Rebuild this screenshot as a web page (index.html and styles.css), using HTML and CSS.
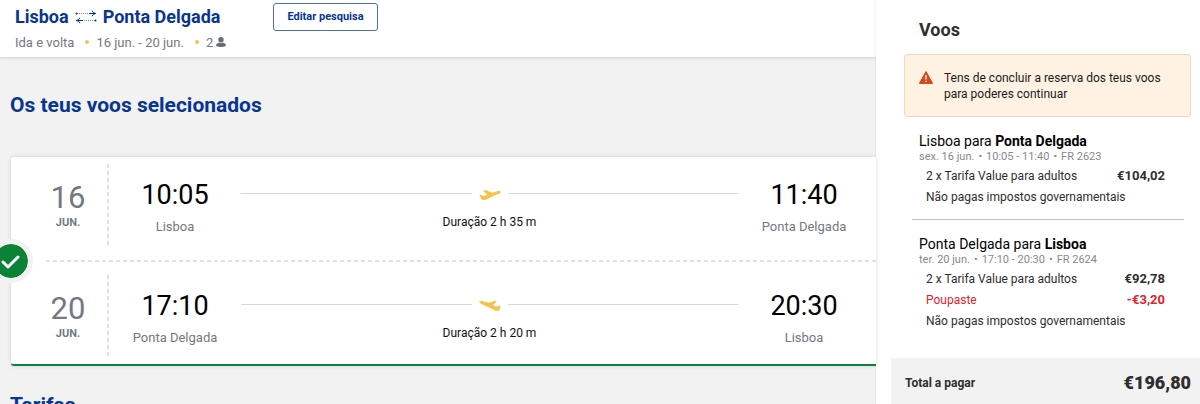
FILE: index.html
```html
<!DOCTYPE html>
<html lang="pt">
<head>
    <meta charset="UTF-8">
    <meta name="viewport" content="width=device-width, initial-scale=1.0">
    <title>Lisboa - Ponta Delgada</title>
    <link rel="stylesheet" href="styles.css">
</head>
<body>
    <svg class="sprite" aria-hidden="true">
        <symbol id="takeoff" viewBox="0 0 22 12">
            <path d="M.4 6.4 2 5.8 4.4 7 8 5.7 4.2 1.6 6.6 .9 13.2 3.8 18.2 2.2C20 1.8 21.4 2 21.6 2.9 21.8 3.7 20.8 4.4 19.4 5L13.8 7.2 8.6 10C6.2 11.2 4 11.4 2.4 10.6L1.8 8.6Z"/>
        </symbol>
        <symbol id="landing" viewBox="0 0 22 12">
            <path d="M.4 1.6C1 .7 2.6 .9 4.2 1.3L10 2.8 15.8.8 17.8 1.6 13.9 5 17.2 6.8 20.2 5.6 21.6 6.2 20.4 10.6C18.6 11.2 16 10.6 13.6 9.2L8 6.4 2.4 4C1.2 3.4 0 2.4.4 1.6Z"/>
        </symbol>
    </svg>

    <div class="page">
        <main>
            <header class="trip-header">
                <div class="trip">
                    <h1>
                        <span>Lisboa</span>
                        <svg class="swap" viewBox="0 0 22 14" aria-hidden="true">
                            <path class="dots" d="M2 3.5h14M7 10.5h14"/>
                            <path d="M14 3.5h7M17 .8Q17.6 2.8 20.5 3.5 17.6 4.2 17 6.2M8 10.5H1M5 7.8Q4.4 9.8 1.5 10.5 4.4 11.2 5 13.2"/>
                            <circle cx="1.5" cy="3.5" r="1"/>
                            <circle cx="20.5" cy="10.5" r="1"/>
                        </svg>
                        <span>Ponta Delgada</span>
                    </h1>
                    <ul class="trip-info">
                        <li>Ida e volta</li>
                        <li>16 jun. - 20 jun.</li>
                        <li>2
                            <svg class="person" viewBox="0 0 10 10" aria-hidden="true">
                                <circle cx="5" cy="2.8" r="2.7"/>
                                <path d="M0 9C0 6.8 1.8 6 3.4 5.6Q5 6.8 6.6 5.6C8.2 6 10 6.8 10 9Q5 11 0 9Z"/>
                            </svg>
                        </li>
                    </ul>
                </div>
                <button type="button" class="edit-btn">Editar pesquisa</button>
            </header>

            <h2>Os teus voos selecionados</h2>

            <section class="journeys">
                <span class="selected">
                    <svg viewBox="0 0 20 20" aria-hidden="true"><path d="M2 11l5 5L17 6"/></svg>
                </span>

                <div class="journey">
                    <div class="date"><span class="day">16</span><span class="month">JUN.</span></div>
                    <div class="airport"><span class="time">10:05</span><span class="city">Lisboa</span></div>
                    <div class="route">
                        <div class="route-line"><svg class="plane"><use href="#takeoff"/></svg></div>
                        <span>Duração 2 h 35 m</span>
                    </div>
                    <div class="airport"><span class="time">11:40</span><span class="city">Ponta Delgada</span></div>
                </div>

                <div class="separator"></div>

                <div class="journey">
                    <div class="date"><span class="day">20</span><span class="month">JUN.</span></div>
                    <div class="airport"><span class="time">17:10</span><span class="city">Ponta Delgada</span></div>
                    <div class="route">
                        <div class="route-line"><svg class="plane"><use href="#landing"/></svg></div>
                        <span>Duração 2 h 20 m</span>
                    </div>
                    <div class="airport"><span class="time">20:30</span><span class="city">Lisboa</span></div>
                </div>
            </section>

            <h2>Tarifas</h2>
        </main>

        <aside class="basket">
            <h3>Voos</h3>

            <div class="alert">
                <svg viewBox="0 0 14 13" aria-hidden="true">
                    <path class="triangle" d="M7 .5 13.6 12.4H.4Z"/>
                    <path class="mark" d="M7 4v4.5M7 9.7v1.3"/>
                </svg>
                <p>Tens de concluir a reserva dos teus voos para poderes continuar</p>
            </div>

            <section class="flight">
                <h4>Lisboa para <b>Ponta Delgada</b></h4>
                <p class="details"><span>sex. 16 jun.</span><span>10:05 - 11:40</span><span>FR 2623</span></p>
                <ul>
                    <li><span>2 x Tarifa Value para adultos</span><b>€104,02</b></li>
                    <li>Não pagas impostos governamentais</li>
                </ul>
            </section>

            <section class="flight">
                <h4>Ponta Delgada para <b>Lisboa</b></h4>
                <p class="details"><span>ter. 20 jun.</span><span>17:10 - 20:30</span><span>FR 2624</span></p>
                <ul>
                    <li><span>2 x Tarifa Value para adultos</span><b>€92,78</b></li>
                    <li class="discount"><span>Poupaste</span><b>-€3,20</b></li>
                    <li>Não pagas impostos governamentais</li>
                </ul>
            </section>

            <div class="total">
                <span>Total a pagar</span>
                <strong>€196,80</strong>
            </div>
        </aside>
    </div>
</body>
</html>
```
FILE: styles.css
```css
:root {
    --blue: #073590;
    --yellow: #f5c24a;
    --green: #0b8235;
    --red: #e0222e;
    --grey: #737982;
    --line: #e1e1e2;
    --bg: #f2f2f2;
}

* {
    box-sizing: border-box;
}

body {
    margin: 0;
    font-family: Roboto, "Liberation Sans", sans-serif;
    font-size: 13px;
    line-height: 16px;
    color: #2e2e2e;
    background: var(--bg);
}

h1, h2, h3, h4, p, ul {
    margin: 0;
    padding: 0;
}

ul {
    list-style: none;
}

.sprite {
    display: none;
}

.page {
    display: flex;
    height: 100vh;
    overflow: hidden;
}

main {
    flex: 1;
    min-width: 0;
}

/* Header */
.trip-header {
    display: flex;
    align-items: flex-start;
    gap: 47px;
    padding: 3px 15px 6px;
    background: #fff;
    border-bottom: 1px solid #dcdcdc;
    box-shadow: 0 1px 2px rgba(0, 0, 0, 0.08);
}

h1 {
    display: flex;
    align-items: center;
    gap: 6px;
    font-size: 18px;
    line-height: 28px;
    color: var(--blue);
}

.swap {
    width: 22px;
    height: 14px;
    fill: none;
    stroke: var(--blue);
    stroke-width: 1;
}

.swap circle {
    fill: var(--blue);
    stroke: none;
}

.swap .dots {
    stroke-dasharray: 1 1;
    opacity: 0.6;
}

.trip-info {
    display: flex;
    padding-top: 4px;
    color: var(--grey);
}

.trip-info li + li::before {
    content: "";
    display: inline-block;
    width: 4px;
    height: 4px;
    margin: 0 7px 3px 11px;
    border-radius: 50%;
    background: var(--yellow);
}

.person {
    width: 10px;
    height: 10px;
    fill: #656b75;
}

.edit-btn {
    padding: 5px 13px;
    font: bold 11px/16px Roboto, "Liberation Sans", sans-serif;
    color: var(--blue);
    background: #fff;
    border: 1px solid #4a70b5;
    border-radius: 3px;
}

h2 {
    padding: 35px 10px 0;
    font-size: 21px;
    line-height: 24px;
    color: var(--blue);
}

/* Selected flights */
.journeys {
    position: relative;
    margin: 40px 0 -8px 11px;
    background: #fff;
    border-bottom: 2px solid var(--green);
    border-radius: 3px 0 0 3px;
    box-shadow: 0 0 4px rgba(0, 0, 0, 0.15);
}

.selected {
    position: absolute;
    top: 50%;
    left: -22px;
    display: grid;
    place-items: center;
    width: 44px;
    height: 44px;
    border: 5px solid var(--bg);
    border-radius: 50%;
    background: var(--green) padding-box;
    transform: translateY(-50%);
}

.selected svg {
    width: 20px;
    height: 20px;
    fill: none;
    stroke: #fff;
    stroke-width: 3;
    stroke-linecap: round;
    stroke-linejoin: round;
}

.journey {
    display: flex;
    padding: 7px 6px 14px 0;
    text-align: center;
}

.separator + .journey {
    padding: 13px 6px 7px 0;
}

.separator {
    height: 2px;
    margin-left: 35px;
    background: repeating-linear-gradient(to right, var(--line) 0 4px, transparent 4px 7px);
}

.date {
    display: flex;
    flex-direction: column;
    width: 98px;
    height: 82px;
    padding: 17px 0 0 16px;
    color: var(--grey);
    background: repeating-linear-gradient(to bottom, var(--line) 0 4px, transparent 4px 7px) right / 2px 100% no-repeat;
}

.day {
    font-size: 31px;
    line-height: 34px;
}

.month {
    font-size: 11px;
    font-weight: bold;
}

.airport {
    display: flex;
    flex-direction: column;
    gap: 9px;
    width: 132px;
    padding-top: 16px;
}

.time {
    font-size: 27px;
    line-height: 30px;
    color: #000;
}

.city {
    color: var(--grey);
}

.route {
    flex: 1;
    padding-top: 25px;
    font-size: 12px;
    color: #111;
}

.route-line {
    display: flex;
    align-items: center;
    gap: 7px;
    height: 12px;
    margin-bottom: 13px;
}

.route-line::before,
.route-line::after {
    content: "";
    flex: 1;
    height: 1px;
    margin-bottom: 3px;
    background: #d8d8da;
}

.plane {
    width: 22px;
    height: 12px;
    fill: var(--yellow);
}

/* Basket */
.basket {
    display: flex;
    flex-direction: column;
    width: 324px;
    padding-left: 15px;
    font-size: 12px;
    background: #fff;
    box-shadow: 0 0 2px rgba(0, 0, 0, 0.12);
}

h3 {
    padding: 19px 28px 13px;
    font-size: 18px;
    line-height: 22px;
}

.alert {
    display: flex;
    gap: 11px;
    margin: 0 9px 0 13px;
    padding: 15px 8px 14px 14px;
    color: #1a1a1a;
    background: #fff2e3;
    border: 1px solid #f6d5bc;
    border-radius: 3px;
}

.alert svg {
    flex: none;
    width: 14px;
    height: 13px;
    margin-top: 1px;
}

.triangle {
    fill: #d2471b;
    stroke: #d2471b;
    stroke-linejoin: round;
}

.mark {
    stroke: #fff;
    stroke-width: 1.3;
}

.flight {
    margin: 0 16px 0 21px;
    padding: 14px 19px 14px 7px;
}

.flight + .flight {
    border-top: 1px solid #bcc2c8;
    padding-bottom: 29px;
}

h4 {
    font-size: 14px;
    font-weight: normal;
    line-height: 20px;
    color: #000;
}

.details {
    font-size: 11px;
    line-height: 12px;
    color: #86898e;
}

.details span + span::before {
    content: "•";
    margin: 0 4px;
}

.flight ul {
    display: flex;
    flex-direction: column;
    gap: 5px;
    padding: 5px 0 0 7px;
}

.flight li {
    display: flex;
    justify-content: space-between;
}

.flight li b {
    font-size: 13px;
}

.flight .discount {
    color: var(--red);
}

.total {
    display: flex;
    flex: 1;
    align-items: center;
    justify-content: space-between;
    padding: 3px 9px 0 14px;
    font-weight: bold;
    background: var(--bg);
}

.total strong {
    font-size: 18px;
}
```
